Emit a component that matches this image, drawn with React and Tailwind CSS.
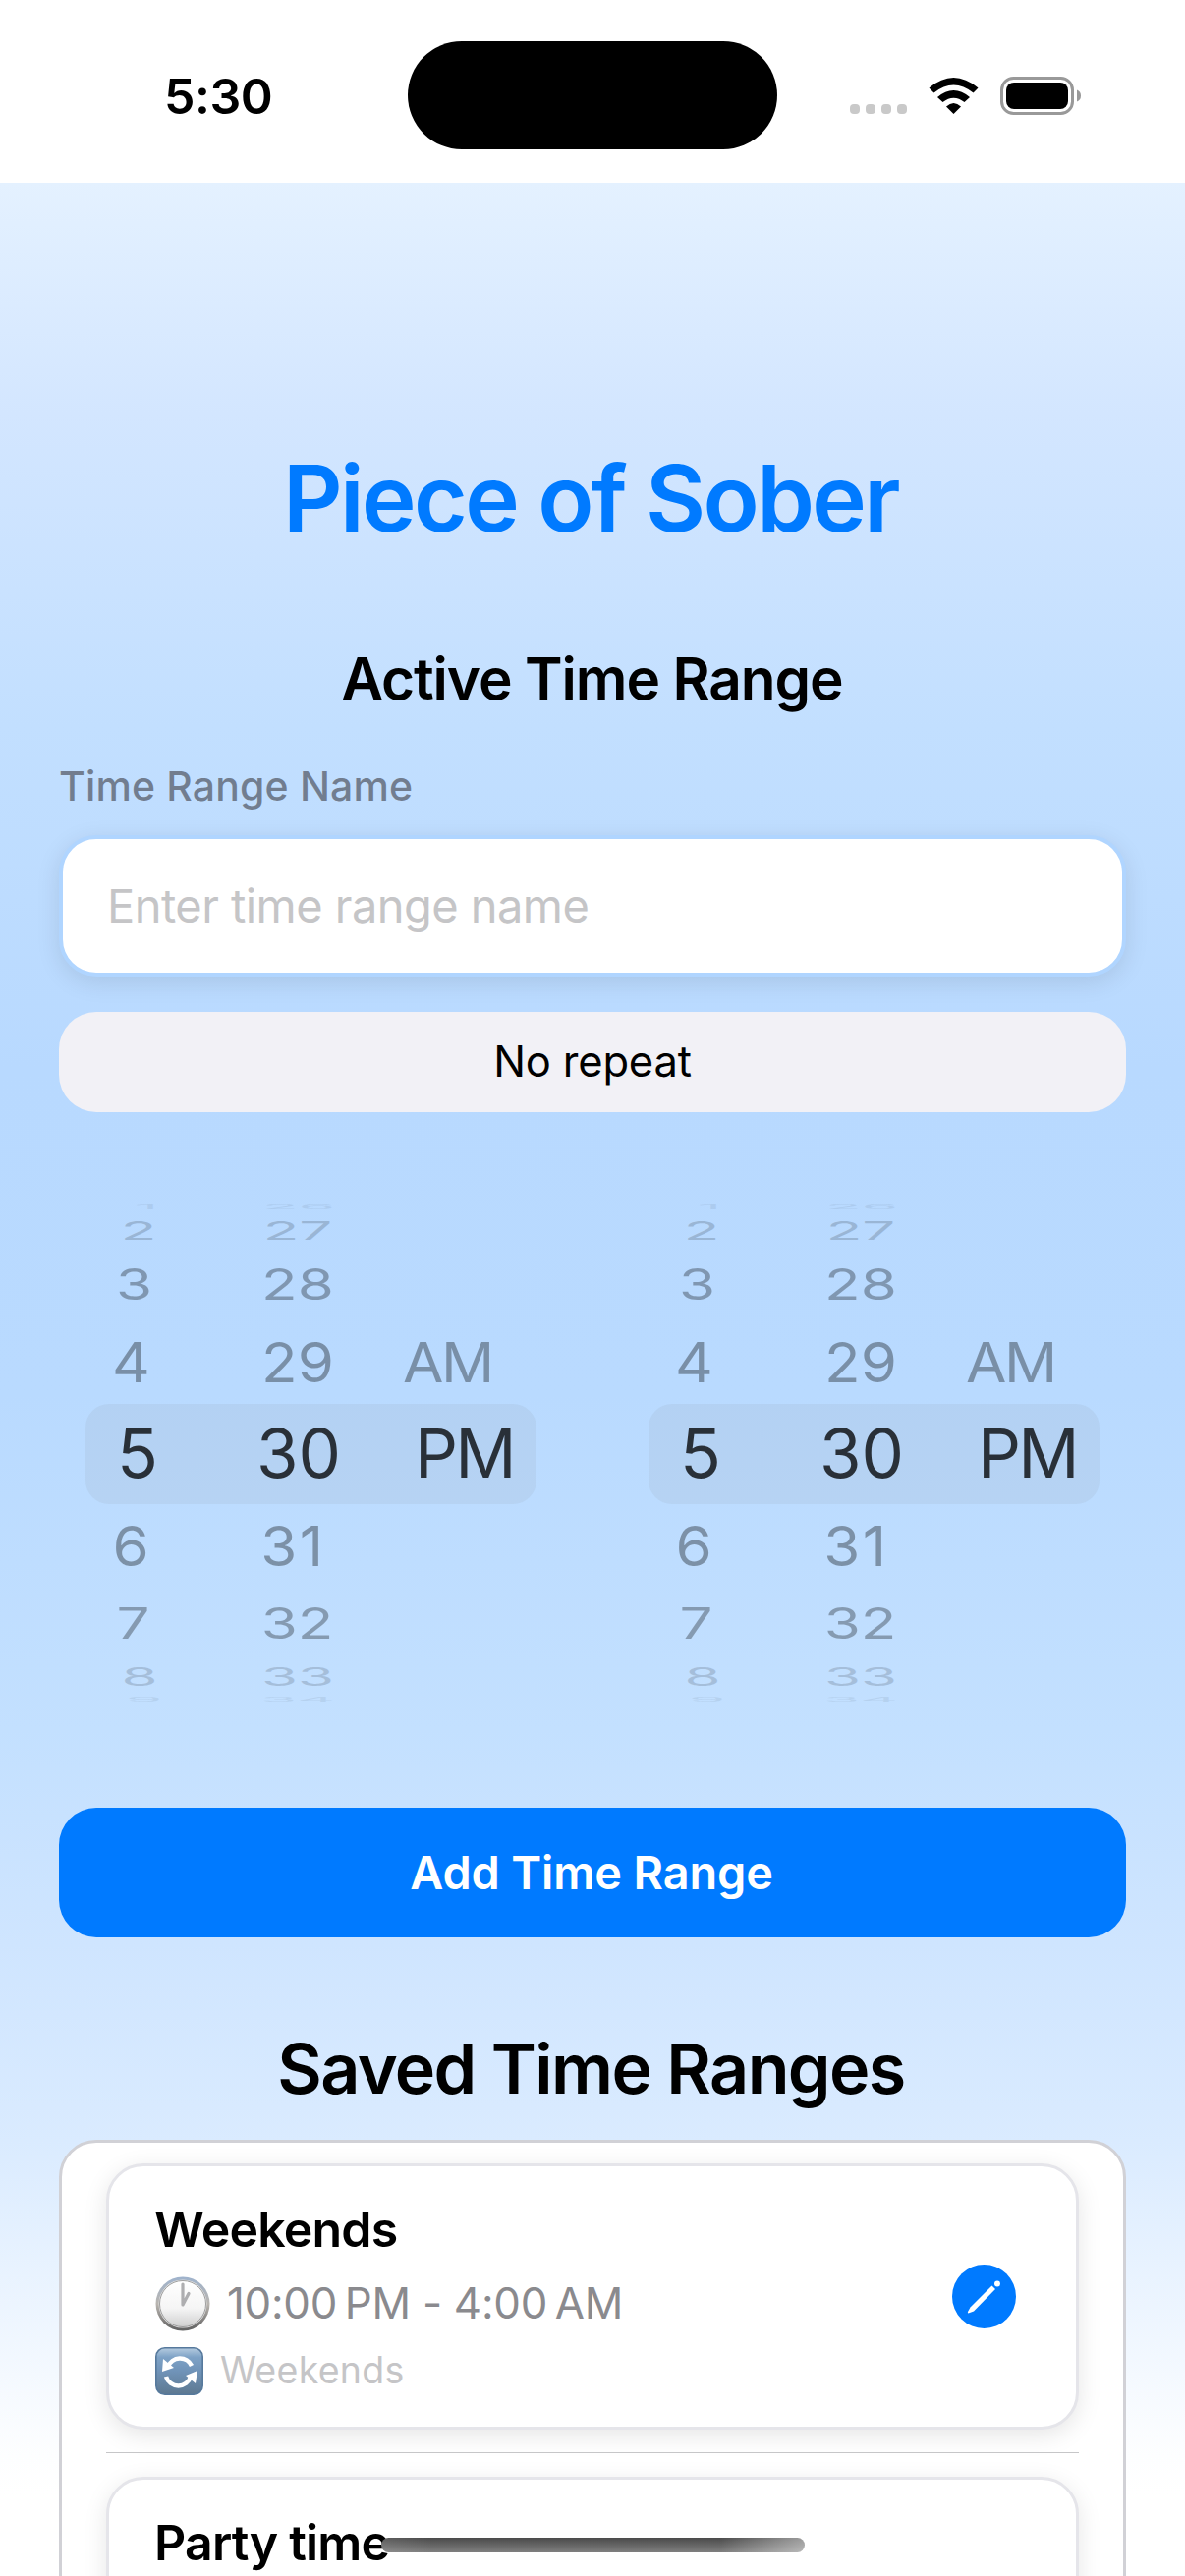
const wheelRows = [
  { h: 10, sy: 0.08, o: 0.06, hour: "1", hx: 149, min: "26", mx: 304, ap: "" },
  { h: 37, sy: 0.38, o: 0.16, hour: "2", hx: 141, min: "27", mx: 303, ap: "" },
  { h: 72, sy: 0.63, o: 0.3, hour: "3", hx: 136.5, min: "28", mx: 303, ap: "" },
  { h: 87, sy: 0.82, o: 0.34, hour: "4", hx: 133.5, min: "29", mx: 303, ap: "AM" },
  { h: 99, sy: 1, o: 0.77, hour: "5", hx: 140, min: "30", mx: 304, ap: "PM", current: true },
  { h: 89, sy: 0.82, o: 0.34, hour: "6", hx: 133, min: "31", mx: 298.5, ap: "" },
  { h: 69, sy: 0.63, o: 0.3, hour: "7", hx: 135.5, min: "32", mx: 302.5, ap: "" },
  { h: 39, sy: 0.37, o: 0.14, hour: "8", hx: 142, min: "33", mx: 303, ap: "" },
  { h: 8, sy: 0.08, o: 0.06, hour: "9", hx: 146.5, min: "34", mx: 303, ap: "" },
];

function WheelText({ x, row, children }) {
  return (
    <span
      className="flex w-0 items-center justify-center whitespace-nowrap text-[69px] leading-none text-black"
      style={{
        transform: `translateX(${x}px) scale(${row.current ? 1 : 0.87}, ${row.sy})`,
        opacity: row.o,
      }}
    >
      {children}
    </span>
  );
}

function TimeWheel() {
  return (
    <div className="grid w-[459px] grid-cols-1">
      <div className="col-start-1 row-start-1 mt-[205px] h-[102px] w-[459px] rounded-[24px] bg-[#78786c]/[0.08]" />
      <div className="col-start-1 row-start-1 flex flex-col">
        {wheelRows.map((row) => (
          <div key={row.min} className="flex shrink-0 items-center" style={{ height: row.h }}>
            <WheelText x={row.hx - 87} row={row}>{row.hour}</WheelText>
            <WheelText x={row.mx - 87} row={row}>
              <span className={row.min === "31" ? "tracking-[3px]" : ""}>{row.min}</span>
            </WheelText>
            <WheelText x={row.current ? 385.5 : 368.5} row={row}>
              <span className="tracking-[-2.6px]">{row.ap}</span>
            </WheelText>
          </div>
        ))}
      </div>
    </div>
  );
}

function StatusBar() {
  return (
    <header className="flex h-[186px] w-full shrink-0 bg-white">
      <div className="w-[415px] pl-[167px] pt-[68px] text-[50px] font-semibold leading-[60px] tracking-[-0.5px]">5:30</div>
      <div className="mt-[42px] h-[110px] w-[376px] rounded-full bg-black" />
      <svg className="ml-[59px] mt-[60px] h-[80px] w-[270px]" viewBox="0 0 270 80">
        <g fill="#c9c9c9">
          <rect x="15" y="46" width="10" height="10" rx="4" />
          <rect x="31" y="46" width="10" height="10" rx="4" />
          <rect x="47" y="46" width="10" height="10" rx="4" />
          <rect x="63" y="46" width="10" height="10" rx="4" />
        </g>
        <path d="M95.500 29.500Q120.500 8.500 145.500 29.500L140.500 34.500Q120.500 18.500 100.500 34.500Z" />
        <path d="M104 39Q120.500 25 137 39L131.500 44Q120.500 35.500 109.500 44Z" />
        <path d="M113 48.500Q120.500 41.500 128 48.500L120.500 56Z" />
        <rect x="169.500" y="19.500" width="72" height="36" rx="12" fill="none" stroke="#999" strokeWidth="3" />
        <rect x="174" y="24" width="63" height="27" rx="8" />
        <path d="M246 31.500Q250 33 250 37.500Q250 42 246 43.500Z" fill="#999" />
      </svg>
    </header>
  );
}

function ClockIcon() {
  return (
    <svg className="h-[56px] w-[56px]" viewBox="0 0 56 56">
      <defs>
        <linearGradient id="rim" x1="0" y1="0" x2="0" y2="1">
          <stop offset="0" stopColor="#9fb3cd" />
          <stop offset=".5" stopColor="#b9b5b0" />
          <stop offset="1" stopColor="#606060" />
        </linearGradient>
        <linearGradient id="face" x1="0" y1="0" x2="0" y2="1">
          <stop offset="0" stopColor="#fff" />
          <stop offset=".6" stopColor="#f5f5f5" />
          <stop offset="1" stopColor="#cfcfcf" />
        </linearGradient>
      </defs>
      <circle cx="28" cy="28" r="27.500" fill="url(#rim)" />
      <circle cx="28" cy="28" r="24.500" fill="#e4e4e4" />
      <circle cx="28" cy="28" r="23.500" fill="url(#face)" stroke="#8b8b8b" strokeWidth=".8" />
      <path d="M28 8V29L34 17.500" fill="none" stroke="#aeaeb0" strokeWidth="3.200" strokeLinecap="round" strokeLinejoin="round" />
    </svg>
  );
}

function RepeatIcon() {
  return (
    <svg className="h-[49px] w-[49px]" viewBox="0 0 49 49">
      <defs>
        <linearGradient id="tile" x1="0" y1="0" x2="0" y2="1">
          <stop offset="0" stopColor="#b6cce0" />
          <stop offset=".2" stopColor="#7ea2c6" />
          <stop offset=".5" stopColor="#7093b8" />
          <stop offset="1" stopColor="#5d7890" />
        </linearGradient>
      </defs>
      <rect x=".8" y=".8" width="47.400" height="47.400" rx="9" fill="url(#tile)" stroke="#56799c" strokeWidth="1.600" />
      <path d="M13 20A13 13 0 0 1 37 19" fill="none" stroke="#fff" strokeWidth="4.500" />
      <path d="M36 30A13 13 0 0 1 11 30" fill="none" stroke="#fff" strokeWidth="4.500" />
      <path d="M8 12L7 25L19 21ZM43 24L31 29L41 37Z" fill="#fff" />
    </svg>
  );
}

function EditIcon() {
  return (
    <svg className="h-[65px] w-[65px]" viewBox="0 0 65 65">
      <circle cx="32.500" cy="32.500" r="32.500" fill="#007aff" />
      <path d="M40.500 21.500L44 25L22 47.500L16.500 49.500Q15.500 49 16 48L18.500 43.500Z" fill="#fff" />
      <circle cx="46" cy="19.500" r="3" fill="#fff" />
    </svg>
  );
}

function RangeCard({ name, children }) {
  return (
    <div className="flex h-[271px] w-[990px] shrink-0 rounded-[38px] border-[3px] border-[#e5e5ea] bg-white shadow-[0_6px_24px_rgba(0,0,0,0.1)]">
      <div className="flex w-[858px] flex-col pl-[47px]">
        <div className="-ml-px mt-[34px] text-[50px] font-semibold leading-[60px] tracking-[-0.8px]">{name}</div>
        {children}
      </div>
      <button className="mt-[100px] h-[65px] w-[65px]" aria-label="Edit"><EditIcon /></button>
    </div>
  );
}

export default function App() {
  return (
    <div className="flex h-[2622px] w-[1206px] flex-col overflow-hidden bg-white font-['Inter',sans-serif] text-black">
      <StatusBar />
      <main className="flex h-[2436px] shrink-0 flex-col items-center bg-[linear-gradient(180deg,#e4f1ff_0px,#d3e6ff_234px,#c2dfff_554px,#b8d9ff_900px,#b9daff_1234px,#c3e0ff_1574px,#cfe5ff_1794px,#daebff_1994px,#fdfeff_2314px,#fff_2354px)]">
        <h1 className="mt-[261px] shrink-0 pr-[4px] text-[94px] font-semibold leading-[120px] tracking-[-2.6px] text-[#007aff]">Piece of Sober</h1>
        <h2 className="mt-[84px] shrink-0 pr-px text-[58.5px] font-semibold leading-[80px] tracking-[-1.1px]">Active Time Range</h2>
        <div className="mt-[39px] w-[1086px] shrink-0 text-[41px] font-medium leading-[60px] tracking-[0.15px] text-[#3c3c43]/60">Time Range Name</div>
        <div className="mt-[20px] flex h-[144px] w-[1086px] shrink-0 items-center rounded-[38px] border-[4px] border-[#b0d5ff] bg-white pl-[45px] text-[47px] tracking-[-0.55px] text-[#c5c5c7] shadow-[0_6px_24px_rgba(0,0,0,0.1)]">Enter time range name</div>
        <div className="mt-[36px] flex h-[102px] w-[1086px] shrink-0 items-center justify-center rounded-[38px] bg-[#f2f1f6] text-[43.5px] tracking-[-0.2px]">No repeat</div>
        <div className="mt-[92px] flex h-[510px] shrink-0 gap-[114px]">
          <TimeWheel />
          <TimeWheel />
        </div>
        <button className="mt-[106px] h-[132px] w-[1086px] shrink-0 rounded-[38px] bg-[#007aff] pr-[2px] text-[46.8px] font-semibold tracking-[-0.1px] text-white">Add Time Range</button>
        <h2 className="mt-[89px] shrink-0 pr-[3px] text-[70px] font-semibold leading-[90px] tracking-[-1.6px]">Saved Time Ranges</h2>
        <section className="mt-[27px] flex h-[600px] w-[1086px] shrink-0 flex-col items-center rounded-t-[38px] border-[3px] border-[#d1d1d6] bg-white pt-[21px]">
          <RangeCard name="Weekends">
            <div className="mt-[18px] flex h-[56px] items-center gap-[17px] text-[43.8px] tracking-[-0.25px] text-[#8a8a8e]"><ClockIcon /><span>10:00&#8239;PM - 4:00&#8239;AM</span></div>
            <div className="mt-[16px] flex h-[49px] items-center gap-[17px] text-[37.5px] tracking-[0.3px] text-[#c5c5c7]"><RepeatIcon /><span>Weekends</span></div>
          </RangeCard>
          <div className="mb-[24px] mt-[23px] h-px w-[990px] shrink-0 bg-[#c6c6c8]" />
          <RangeCard name="Party time" />
        </section>
      </main>
      <div className="absolute left-[388px] top-[2583px] h-[15px] w-[431px] rounded-full bg-[linear-gradient(90deg,rgba(255,255,255,.1),transparent_12%,transparent_80%,rgba(255,255,255,.45)),linear-gradient(180deg,#4b4b4b,#7f7f7f)]" />
    </div>
  );
}
